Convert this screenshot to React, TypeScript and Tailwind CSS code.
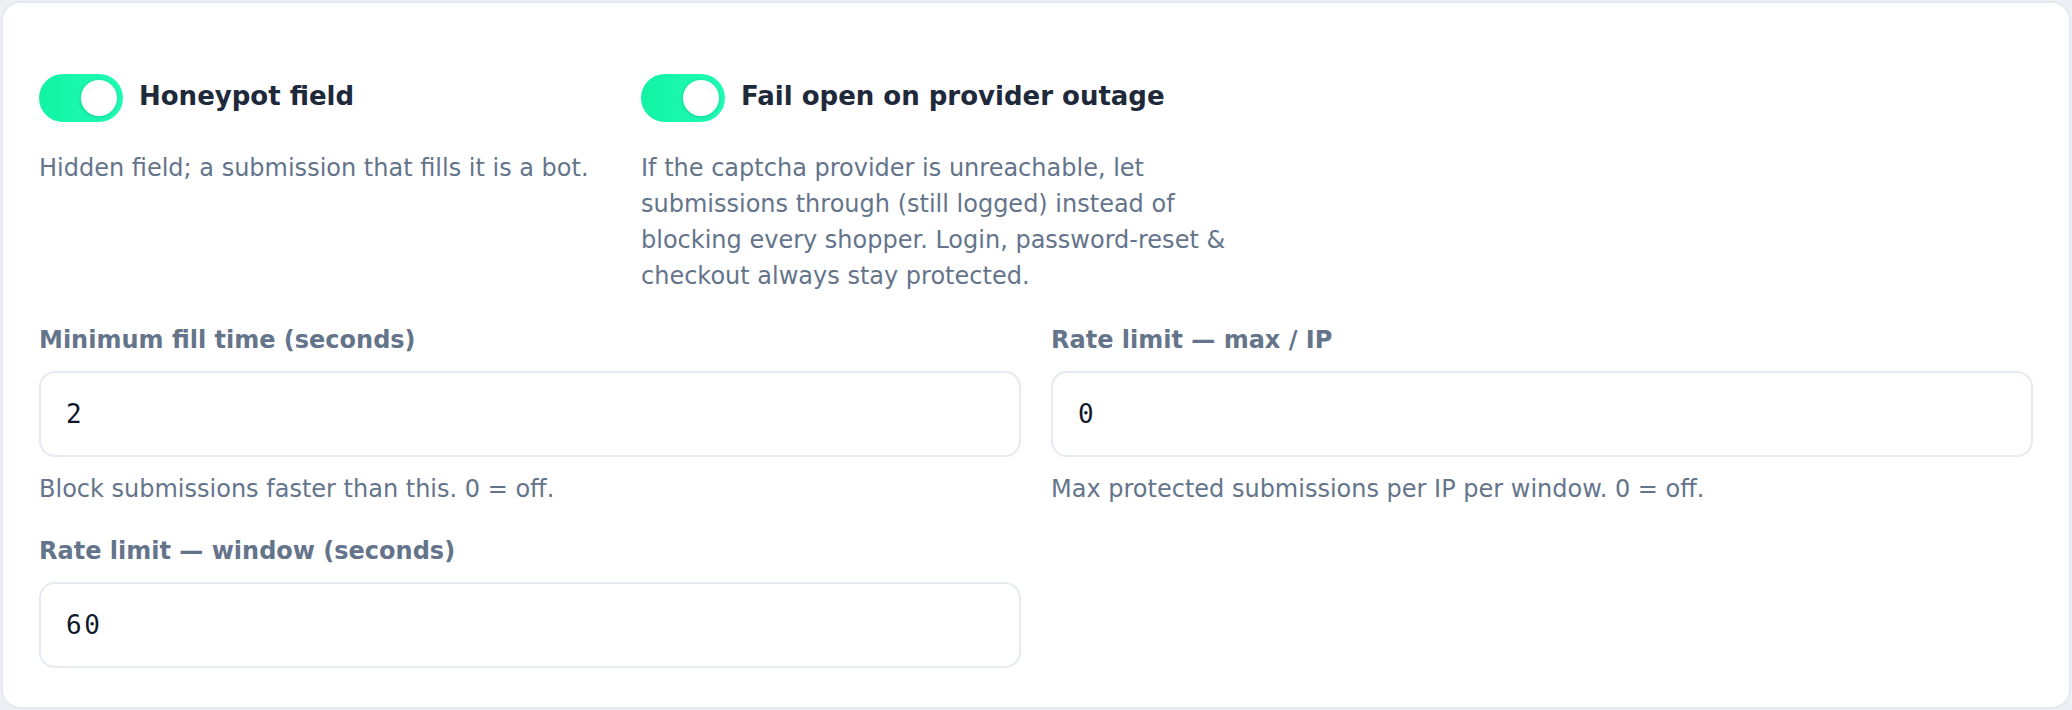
import { useState } from "react";

type ToggleProps = {
  on: boolean;
  onChange: (v: boolean) => void;
};

const Toggle = ({ on, onChange }: ToggleProps) => (
  <button
    type="button"
    onClick={() => onChange(!on)}
    className={`flex h-[48px] w-[84px] shrink-0 items-center rounded-full px-[6px] ${
      on ? "justify-end bg-gradient-to-r from-[#12f3a5] to-[#1ffdb5]" : "justify-start bg-[#cbd5e1]"
    }`}
  >
    <span className="block h-[36px] w-[36px] rounded-full bg-white shadow-[0_1px_4px_rgba(15,23,42,0.18)]" />
  </button>
);

type FieldProps = {
  label: string;
  value: string;
  help?: string;
};

const Field = ({ label, value, help }: FieldProps) => {
  const [val, setVal] = useState(value);
  return (
    <div className="flex flex-col">
      <label className="text-[24px] font-bold leading-[36px] text-[#64748b]">{label}</label>
      <input
        value={val}
        onChange={(e) => setVal(e.target.value)}
        className="mt-[13px] box-border h-[86px] w-full rounded-[16px] border-2 border-[#e5e9f0] bg-white px-[25px] font-['DejaVu_Sans_Mono',monospace] text-[26px] tracking-[0.1em] text-[#0f172a] outline-none"
      />
      {help && <p className="mt-[14px] text-[24px] leading-[36px] text-[#64748b]">{help}</p>}
    </div>
  );
};

export default function App() {
  const [honeypot, setHoneypot] = useState(true);
  const [failOpen, setFailOpen] = useState(true);

  return (
    <div className="h-[710px] w-[2072px] bg-[#eceff4] p-px font-['DejaVu_Sans',sans-serif]">
      <div className="box-border h-full rounded-[20px] border-2 border-[#e6eaf0] bg-white px-[36px] pt-[71px]">
        <div className="flex gap-[24px]">
          <div className="w-[578px]">
            <div className="flex items-center gap-[16px]">
              <Toggle on={honeypot} onChange={setHoneypot} />
              <span className="pb-[4px] text-[26px] font-bold text-[#1e293b]">Honeypot field</span>
            </div>
            <p className="mt-[28px] text-[24px] leading-[36px] text-[#64748b]">
              Hidden field; a submission that fills it is a bot.
            </p>
          </div>
          <div className="w-[600px]">
            <div className="flex items-center gap-[16px]">
              <Toggle on={failOpen} onChange={setFailOpen} />
              <span className="pb-[4px] text-[26px] font-bold text-[#1e293b]">Fail open on provider outage</span>
            </div>
            <p className="mt-[28px] text-[24px] leading-[36px] text-[#64748b]">
              If the captcha provider is unreachable, let submissions through (still logged) instead of
              blocking every shopper. Login, password-reset &amp; checkout always stay protected.
            </p>
          </div>
        </div>

        <div className="mt-[28px] grid grid-cols-2 gap-x-[30px] gap-y-[26px]">
          <Field
            label="Minimum fill time (seconds)"
            value="2"
            help="Block submissions faster than this. 0 = off."
          />
          <Field
            label="Rate limit — max / IP"
            value="0"
            help="Max protected submissions per IP per window. 0 = off."
          />
          <Field label="Rate limit — window (seconds)" value="60" />
        </div>
      </div>
    </div>
  );
}
